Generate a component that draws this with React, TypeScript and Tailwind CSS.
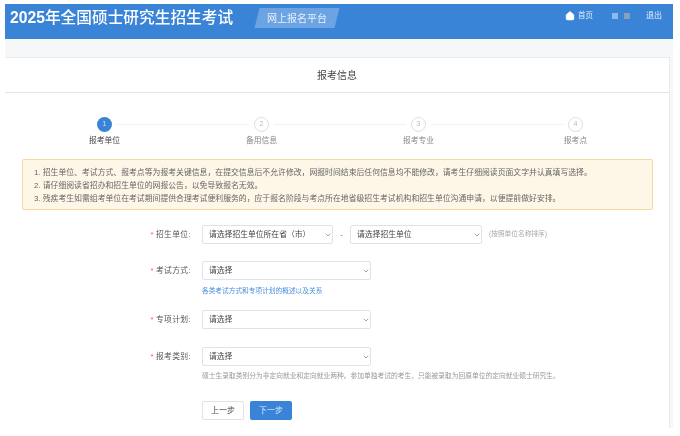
import { ChevronDown, House } from "lucide-react";

const steps = ["报考单位", "备用信息", "报考专业", "报考点"];

function Select({ text, width }: { text: string; width: string }) {
  return (
    <div className={`relative h-[19px] shrink-0 ${width}`}>
      <select className="block h-full w-full appearance-none rounded-[2px] border border-[#dfe3e8] bg-white pl-[6px] text-[7.8px] text-[#444] outline-none">
        <option>{text}</option>
      </select>
      {/* chevron sits over the native select */}
      <ChevronDown size={8} strokeWidth={2} className="pointer-events-none absolute right-[1px] top-[6px] text-[#777]" />
    </div>
  );
}

function Label({ text }: { text: string }) {
  return (
    <div className="w-[64px] shrink-0 pr-[11px] text-right text-[7.8px] tracking-[0.35px] text-[#555]">
      <span className="mr-[2px] text-[#e8645a]">*</span>
      {text}:
    </div>
  );
}

export default function App() {
  return (
    <div
      className="h-[436px] w-[680px] overflow-hidden bg-white pl-[5px] pt-[4px] blur-[0.35px]"
      style={{ fontFamily: '"Liberation Sans", "Noto Sans CJK SC", sans-serif' }}
    >
      <div className="w-[668px] bg-[#f5f7f9]">
        {/* Header */}
        <header className="flex h-[35px] items-start justify-between bg-[#3a84d8] pl-[5px] text-white">
          <div className="flex h-[27px] items-center">
            <h1 className="text-[15.7px] font-medium leading-[27px]">
              <span className="font-semibold">2025</span>年全国硕士研究生招生考试
            </h1>
            <div className="ml-[24px] flex h-[20px] w-[80px] -skew-x-[14deg] items-center justify-center bg-[#6ca3e2]">
              <span className="skew-x-[14deg] text-[10px] text-[#e8f0fa]">网上报名平台</span>
            </div>
          </div>
          <nav className="mr-[11px] mt-[6px] flex items-center text-[7.5px] text-[#e4eefa]">
            <House size={10} fill="white" className="mr-[3px] text-white" />
            <span>首页</span>
            <span className="ml-[19px] flex h-[6px] w-[18px] items-center justify-between">
              <span className="h-[6px] w-[6px] bg-[#8fb8e8]" />
              <span className="h-[6px] w-[6px] bg-[#8a9fbd]" />
            </span>
            <span className="ml-[16px] text-[8px]">退出</span>
          </nav>
        </header>

        {/* Card */}
        <main className="mt-[18px] h-[371px] w-[665px] border-r border-t border-[#e8eaec] bg-white">
          <div className="flex h-[35px] items-center justify-center border-b border-[#e3e5e8] text-[10px] text-[#444]">报考信息</div>

          {/* Steps */}
          <div className="ml-[21px] mt-[24px] grid w-[628px] grid-cols-4">
            {steps.map((s, i) => (
              <div key={s} className="relative flex flex-col items-center">
                <div
                  className={
                    i === 0
                      ? "flex h-[15px] w-[15px] items-center justify-center rounded-full bg-[#3a84d8] text-[7px] text-[#cfe2f7]"
                      : "flex h-[15px] w-[15px] items-center justify-center rounded-full border border-[#dcdfe3] bg-white text-[7px] text-[#bbb]"
                  }
                >
                  {i + 1}
                </div>
                {i < 3 && <div className="absolute left-[91px] top-[7px] h-px w-[132px] bg-[#f0f1f3]" />}
                <div className={i === 0 ? "mt-[3px] text-[7.8px] leading-[12px] text-[#444]" : "mt-[3px] text-[7.8px] leading-[12px] text-[#888]"}>{s}</div>
              </div>
            ))}
          </div>

          {/* Notice */}
          <div className="ml-[17px] mt-[12px] h-[51px] w-[631px] rounded-[2px] border border-[#fad9a0] bg-[#fef6e7] pl-[11px] pt-[6px] text-[7.85px] leading-[13px] text-[#666]">
            <p>1. 招生单位、考试方式、报考点等为报考关键信息，在提交信息后不允许修改，网报时间结束后任何信息均不能修改，请考生仔细阅读页面文字并认真填写选择。</p>
            <p>2. 请仔细阅读省招办和招生单位的网报公告，以免导致报名无效。</p>
            <p>3. 残疾考生如需组考单位在考试期间提供合理考试便利服务的，应于报名阶段与考点所在地省级招生考试机构和招生单位沟通申请，以便提前做好安排。</p>
          </div>

          {/* Form */}
          <div className="ml-[133px] mt-[15px] flex flex-col">
            <div className="flex items-center">
              <Label text="招生单位" />
              <Select text="请选择招生单位所在省（市）" width="w-[131px]" />
              <span className="w-[17px] text-center text-[8px] text-[#666]">-</span>
              <Select text="请选择招生单位" width="w-[132px]" />
              <span className="ml-[7px] text-[6.7px] text-[#aaa]">(按照单位名称排序)</span>
            </div>

            <div className="mt-[17px] flex items-center">
              <Label text="考试方式" />
              <Select text="请选择" width="w-[169px]" />
            </div>
            <div className="ml-[64px] mt-[6px] text-[6.7px] leading-[10px] text-[#4a90dc]">各类考试方式和专项计划的概述以及关系</div>

            <div className="mt-[14px] flex items-center">
              <Label text="专项计划" />
              <Select text="请选择" width="w-[169px]" />
            </div>

            <div className="mt-[18px] flex items-center">
              <Label text="报考类别" />
              <Select text="请选择" width="w-[169px]" />
            </div>
            <div className="ml-[64px] mt-[5px] whitespace-nowrap text-[6.75px] leading-[10px] text-[#999]">
              硕士生录取类别分为非定向就业和定向就业两种。参加单独考试的考生，只能被录取为回原单位的定向就业硕士研究生。
            </div>

            <div className="ml-[64px] mt-[20px] flex gap-[6px]">
              <button className="h-[19px] w-[42px] rounded-[2px] border border-[#dfe3e8] bg-white text-[8px] text-[#444]">上一步</button>
              <button className="h-[19px] w-[42px] rounded-[2px] bg-[#3a84d8] text-[8px] text-[#dbe9f9]">下一步</button>
            </div>
          </div>
        </main>
      </div>
    </div>
  );
}
